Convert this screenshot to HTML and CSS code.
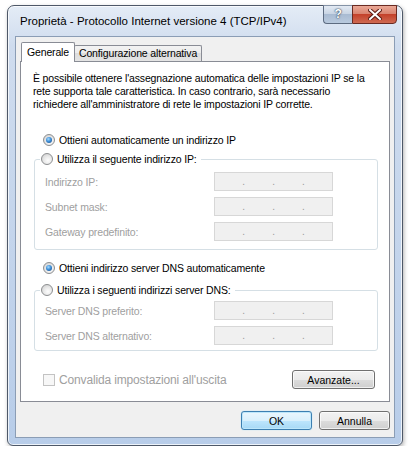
FILE: index.html
```html
<!DOCTYPE html>
<html lang="it">
  <head>
    <meta charset="UTF-8" />
    <meta name="viewport" content="width=device-width, initial-scale=1.0" />
    <title>Proprietà - Protocollo Internet versione 4 (TCP/IPv4)</title>
    <link rel="stylesheet" href="styles.css">
  </head>
  <body>
    <div class="window">
      <div class="titlebar">
        <div class="title">Proprietà - Protocollo Internet versione 4 (TCP/IPv4)</div>
        <div class="caption">
          <div class="cap help">?</div>
          <div class="cap close">
            <svg width="14" height="11" viewBox="0 0 14 11">
              <path d="M2 1 L12 10 M12 1 L2 10" stroke="#5a1a12" stroke-width="4" stroke-linecap="square" />
              <path d="M2 1 L12 10 M12 1 L2 10" stroke="#fff" stroke-width="2" stroke-linecap="square" />
            </svg>
          </div>
        </div>
      </div>

      <div class="client">
        <div class="tabs">
          <div class="tab active">Generale</div>
          <div class="tab">Configurazione alternativa</div>
        </div>

        <div class="panel">
          <p class="intro">
            È possibile ottenere l'assegnazione automatica delle impostazioni IP se la<br>
            rete supporta tale caratteristica. In caso contrario, sarà necessario<br>
            richiedere all'amministratore di rete le impostazioni IP corrette.
          </p>

          <div class="option first">
            <span class="radio checked"></span>
            <span>Ottieni automaticamente un indirizzo IP</span>
          </div>

          <fieldset class="group">
            <legend class="option">
              <span class="radio"></span>
              <span>Utilizza il seguente indirizzo IP:</span>
            </legend>
            <div class="row">
              <span class="label">Indirizzo IP:</span>
              <span class="ip"><i></i><b>.</b><i></i><b>.</b><i></i><b>.</b><i></i></span>
            </div>
            <div class="row">
              <span class="label">Subnet mask:</span>
              <span class="ip"><i></i><b>.</b><i></i><b>.</b><i></i><b>.</b><i></i></span>
            </div>
            <div class="row">
              <span class="label">Gateway predefinito:</span>
              <span class="ip"><i></i><b>.</b><i></i><b>.</b><i></i><b>.</b><i></i></span>
            </div>
          </fieldset>

          <div class="option dns-auto">
            <span class="radio checked"></span>
            <span>Ottieni indirizzo server DNS automaticamente</span>
          </div>

          <fieldset class="group dns">
            <legend class="option">
              <span class="radio"></span>
              <span>Utilizza i seguenti indirizzi server DNS:</span>
            </legend>
            <div class="row">
              <span class="label">Server DNS preferito:</span>
              <span class="ip"><i></i><b>.</b><i></i><b>.</b><i></i><b>.</b><i></i></span>
            </div>
            <div class="row">
              <span class="label">Server DNS alternativo:</span>
              <span class="ip"><i></i><b>.</b><i></i><b>.</b><i></i><b>.</b><i></i></span>
            </div>
          </fieldset>

          <div class="panel-footer">
            <div class="check">
              <span class="checkbox"></span>
              <span>Convalida impostazioni all'uscita</span>
            </div>
            <button class="btn advanced">Avanzate...</button>
          </div>
        </div>

        <div class="dialog-buttons">
          <button class="btn default">OK</button>
          <button class="btn">Annulla</button>
        </div>
      </div>
    </div>
  </body>
</html>
```

FILE: styles.css
```css
* {
  box-sizing: border-box;
}

body {
  margin: 0;
  background: #fff;
  font-family: "Liberation Sans", Arial, sans-serif;
  font-size: 10.5px;
  letter-spacing: -0.15px;
  color: #000;
  overflow: hidden;
}

.window {
  margin: 5px 0 0 7px;
  width: 396px;
  padding: 0 7px 7px;
  border: 1px solid #4e5868;
  border-radius: 7px 7px 6px 6px;
  background: linear-gradient(#e4ecf6, #cfdcee 40px, #b8cde9);
  box-shadow: inset 0 0 0 1px rgba(255, 255, 255, 0.75), 1px 2px 4px rgba(0, 0, 0, 0.3);
}

.titlebar {
  height: 30px;
  display: flex;
  align-items: flex-start;
}

.title {
  flex: 1;
  font-size: 11.5px;
  letter-spacing: 0;
  padding: 9px 0 0 5px;
}

.caption {
  display: flex;
  margin: -1px -2px 0 0;
}

.cap {
  height: 19px;
  border: 1px solid #5d6b80;
  border-top-color: #8593a6;
}

.help {
  width: 29px;
  border-right: none;
  border-radius: 0 0 0 4px;
  background: linear-gradient(#e3eaf3, #c9d5e4 45%, #a9bbd2 50%, #b9cade);
  color: #fff;
  font-weight: bold;
  font-size: 12px;
  line-height: 17px;
  text-align: center;
  text-shadow: 0 0 2px #2b3a50, 0 0 1px #2b3a50;
}

.close {
  width: 45px;
  border-color: #6a2a22;
  border-radius: 0 0 4px 0;
  background: linear-gradient(#eaa896, #d98471 45%, #c4412b 50%, #cf6a52);
  display: flex;
  align-items: center;
  justify-content: center;
}

.client {
  border: 1px solid #8b9db5;
  background: #f0f0f0;
  padding: 5px 4px 7px;
}

.tabs {
  display: flex;
  align-items: flex-start;
  height: 19px;
  padding-left: 1px;
  position: relative;
  z-index: 1;
}

.tab {
  height: 16px;
  margin-top: 3px;
  margin-left: -1px;
  padding: 0 4px;
  border: 1px solid #898c95;
  border-bottom: none;
  border-radius: 2px 2px 0 0;
  background: linear-gradient(#f3f3f3, #ebebeb 50%, #dddddd 50%, #e4e4e4);
  line-height: 15px;
}

.tab.active {
  height: 20px;
  margin: 0;
  padding: 0 5px;
  background: #fff;
  line-height: 19px;
}

.panel {
  border: 1px solid #898c95;
  background: #fff;
  padding: 10px 11px 12px 0;
}

.intro {
  margin: 0 0 0 12px;
  line-height: 13px;
}

.option {
  display: flex;
  align-items: center;
  height: 14px;
  gap: 4px;
  margin-left: 22px;
}

.option.first {
  margin-top: 22px;
}

.radio {
  width: 12px;
  height: 12px;
  border-radius: 50%;
  border: 1px solid #8c8e90;
  background: radial-gradient(circle at 60% 65%, #fdfdfd 0, #e9e9e9 45%, #c8c8c8 100%);
  position: relative;
}

.radio.checked::after {
  content: "";
  position: absolute;
  left: 2px;
  top: 2px;
  width: 6px;
  height: 6px;
  border-radius: 50%;
  background: radial-gradient(circle at 40% 35%, #a6dcff 0, #3e8fd8 45%, #113f7c 100%);
}

.group {
  margin: 5px 0 0 13px;
  padding: 6px 0 8px 5px;
  border: 1px solid #d5dfe5;
  border-radius: 3px;
}

.group legend {
  margin-left: 0;
  padding: 0 4px 0 1px;
}

.dns {
  margin-top: 8px;
  padding-top: 4px;
  padding-bottom: 5px;
}

.option.dns-auto {
  margin-top: 11px;
}

.row {
  display: grid;
  grid-template-columns: 169px 119px;
  align-items: center;
  height: 19px;
  padding-left: 5px;
  color: #a0a0a0;
}

.row + .row {
  margin-top: 6px;
}

.ip {
  display: flex;
  height: 19px;
  border: 1px solid #d7d7d7;
  background: #f0f0f0;
}

.ip i {
  flex: 1;
}

.ip b {
  font-weight: normal;
  font-size: 10px;
  line-height: 17px;
  color: #9a9a9a;
}

.panel-footer {
  display: flex;
  align-items: center;
  justify-content: space-between;
  margin: 19px 3px 0 22px;
}

.check {
  display: flex;
  align-items: center;
  gap: 4px;
  font-size: 12px;
  color: #a0a0a0;
}

.checkbox {
  width: 12px;
  height: 12px;
  border: 1px solid #c3c3c3;
  background: #f7f7f7;
}

.btn {
  height: 19px;
  padding: 0;
  border: 1px solid #707070;
  border-radius: 3px;
  background: linear-gradient(#f2f2f2, #ebebeb 50%, #dddddd 50%, #cfcfcf);
  box-shadow: inset 0 0 0 1px rgba(255, 255, 255, 0.7);
  font-family: "Liberation Sans", Arial, sans-serif;
  font-size: 10.5px;
  color: #000;
}

.advanced {
  width: 83px;
}

.dialog-buttons {
  display: flex;
  justify-content: flex-end;
  gap: 7px;
  margin-top: 9px;
}

.dialog-buttons .btn {
  width: 71px;
}

.btn.default {
  border-color: #3c7fb1;
  background: linear-gradient(#eaf6fd, #d9f0fc 50%, #bee6fd 50%, #a7d9f5);
  box-shadow: inset 0 0 0 1px #bde7fb, 0 0 1px #7fd3f8;
}
```
